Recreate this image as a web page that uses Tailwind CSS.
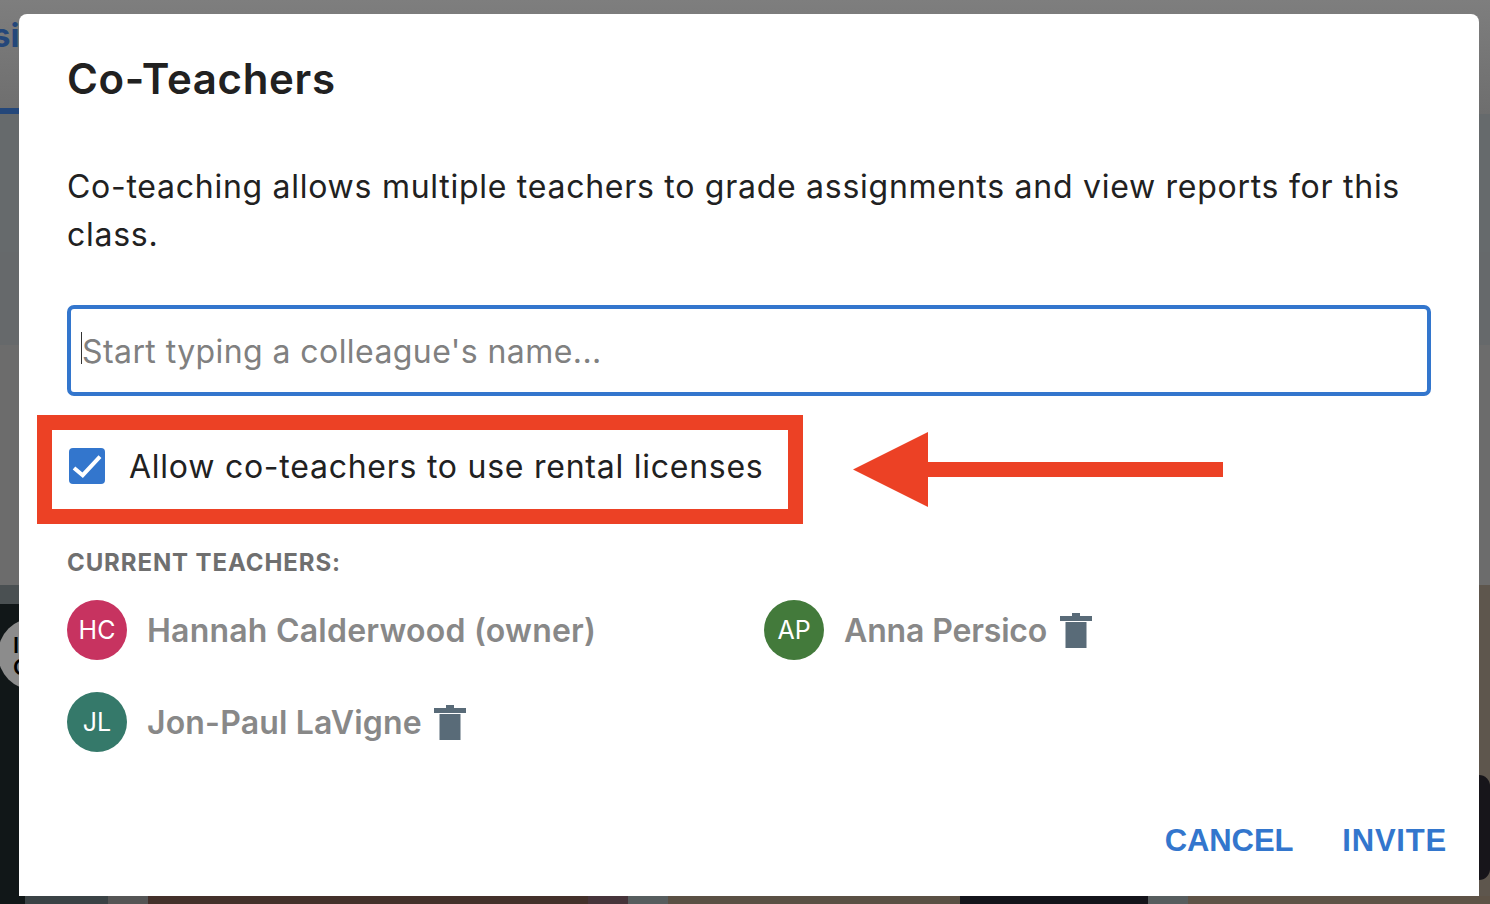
<!DOCTYPE html>
<html lang="en">
<head>
  <meta charset="UTF-8">
  <title>Co-Teachers</title>
  <script src="https://cdn.jsdelivr.net/npm/@tailwindcss/browser@4"></script>
</head>
<body class="relative h-[904px] w-[1490px] overflow-hidden bg-[#6a6a6a] font-['Inter','Noto_Sans',sans-serif]">
  <!-- page behind the dialog -->
  <div class="absolute inset-0 flex flex-col">
    <div class="relative h-[114px] bg-gradient-to-b from-[#7e7e7e] to-[#6e6e6e]">
      <span class="absolute left-[-8px] top-[15px] text-[33px] font-bold leading-[40px] text-[#24477a]">si</span>
      <div class="absolute bottom-0 left-0 h-[6px] w-[20px] bg-[#24477a]"></div>
    </div>
    <div class="h-[138px] bg-[#666a6c]"></div>
    <div class="h-[93px] bg-[#66696b]"></div>
    <div class="h-[240px] bg-[#6c6c6c]"></div>
    <div class="relative flex-1 bg-[#111718]">
      <div class="absolute left-0 top-0 h-[19px] w-[25px] bg-[#4a5052]"></div>
      <div class="absolute left-[-2px] top-[33px] h-[72px] w-[76px] overflow-hidden rounded-full bg-[#8c8c8c]">
        <div class="pl-[15px] pt-[16px] text-[22px] font-semibold leading-[22px] text-black">I<br>C</div>
      </div>
      <!-- sliver on the right, below the dialog -->
      <div class="absolute right-0 top-0 h-full w-[11px] bg-[#5e564d]"></div>
      <div class="absolute right-0 top-[190px] h-[105px] w-[11px] rounded-r-full bg-[#17151a]"></div>
      <div class="absolute bottom-0 left-[25px] flex h-[8px] w-[1465px]">
        <div class="w-[83px] bg-[#3a4245]"></div>
        <div class="w-[40px] bg-[#555555]"></div>
        <div class="w-[440px] bg-[#43302a]"></div>
        <div class="w-[40px] bg-[#46343a]"></div>
        <div class="w-[40px] bg-[#575d5e]"></div>
        <div class="w-[292px] bg-[#5a5044]"></div>
        <div class="w-[188px] bg-[#14141a]"></div>
        <div class="w-[40px] bg-[#575d5e]"></div>
        <div class="flex-1 bg-[#5e5347]"></div>
      </div>
    </div>
  </div>

  <!-- dialog -->
  <div class="absolute left-[19px] top-[14px] flex h-[882px] w-[1460px] flex-col rounded-t-[8px] bg-white pl-[48px] pr-[48px]">
    <h2 class="mt-[38px] text-[42px] font-semibold leading-[54px] tracking-[0.65px] text-[#212121]">Co-Teachers</h2>
    <p class="mt-[57px] text-[32px] leading-[48px] tracking-[0.73px] text-[#212121]">Co-teaching allows multiple teachers to grade assignments and view reports for this class.</p>
    <div class="mt-[46px] flex h-[91px] items-center rounded-[7px] border-[4px] border-[#3376cd] pl-[10px]">
      <div class="mb-[6px] h-[32px] w-px bg-[#333333]"></div>
      <input class="w-full bg-transparent pt-[2px] text-[32px] tracking-[0.42px] outline-none placeholder:text-[#808080]" placeholder="Start typing a colleague's name...">
    </div>

    <div class="relative mt-[19px] flex items-center">
      <div class="ml-[-30px] flex h-[109px] w-[766px] items-start border-[15px] border-[#ec4125] pl-[17px] pt-[18px]">
        <div class="flex h-[36px] w-[36px] items-center justify-center rounded-[4px] bg-[#3376cd]">
          <svg class="h-[36px] w-[36px]" viewBox="0 0 36 36" fill="none" stroke="white" stroke-width="4"><path d="M5 20l8.7 7.2L31 8.7"></path></svg>
        </div>
        <span class="ml-[24px] pt-[1px] text-[32px] leading-[36px] tracking-[0.75px] text-[#212121]">Allow co-teachers to use rental licenses</span>
      </div>
      <svg class="ml-[50px] h-[75px] w-[370px]" viewBox="0 0 370 75" fill="#ec4125"><path d="M0 37.5L75 0V30H370V45H75V75Z"></path></svg>
    </div>

    <div class="mt-[24px] text-[24px] font-bold leading-[30px] tracking-[0.9px] text-[#6f6f6f]">CURRENT TEACHERS:</div>

    <div class="mt-[22px] grid grid-cols-[697px_1fr] gap-y-[32px]">
      <div class="flex items-center">
        <div class="flex h-[60px] w-[60px] items-center justify-center rounded-full bg-[#c73360] pt-[2px] text-[25px] text-white">HC</div>
        <span class="ml-[20px] pt-[2px] text-[32px] font-semibold tracking-[0.22px] text-[#888888]">Hannah Calderwood (owner)</span>
      </div>
      <div class="flex items-center">
        <div class="flex h-[60px] w-[60px] items-center justify-center rounded-full bg-[#437a3b] pt-[2px] text-[25px] text-white">AP</div>
        <span class="ml-[20px] pt-[2px] text-[32px] font-semibold tracking-[-0.15px] text-[#888888]">Anna Persico</span>
        <svg class="ml-[13px] h-[35px] w-[32px]" viewBox="0 0 32 35" fill="#596b78"><path d="M12 0h8v3h12v5H0V3h12zM5.5 9h21v26h-21z"></path></svg>
      </div>
      <div class="flex items-center">
        <div class="flex h-[60px] w-[60px] items-center justify-center rounded-full bg-[#35796a] pt-[2px] text-[25px] text-white">JL</div>
        <span class="ml-[20px] pt-[2px] text-[32px] font-semibold tracking-[0.16px] text-[#888888]">Jon-Paul LaVigne</span>
        <svg class="ml-[12px] h-[35px] w-[32px]" viewBox="0 0 32 35" fill="#596b78"><path d="M12 0h8v3h12v5H0V3h12zM5.5 9h21v26h-21z"></path></svg>
      </div>
    </div>

    <div class="mr-[-16px] mt-auto mb-[35px] flex justify-end gap-[49px] text-[31px] font-bold leading-[40px] text-[#3376cd] font-['Liberation_Sans',sans-serif]">
      <span class="tracking-[-0.1px]">CANCEL</span>
      <span class="tracking-[0.8px]">INVITE</span>
    </div>
  </div>
</body>
</html>
